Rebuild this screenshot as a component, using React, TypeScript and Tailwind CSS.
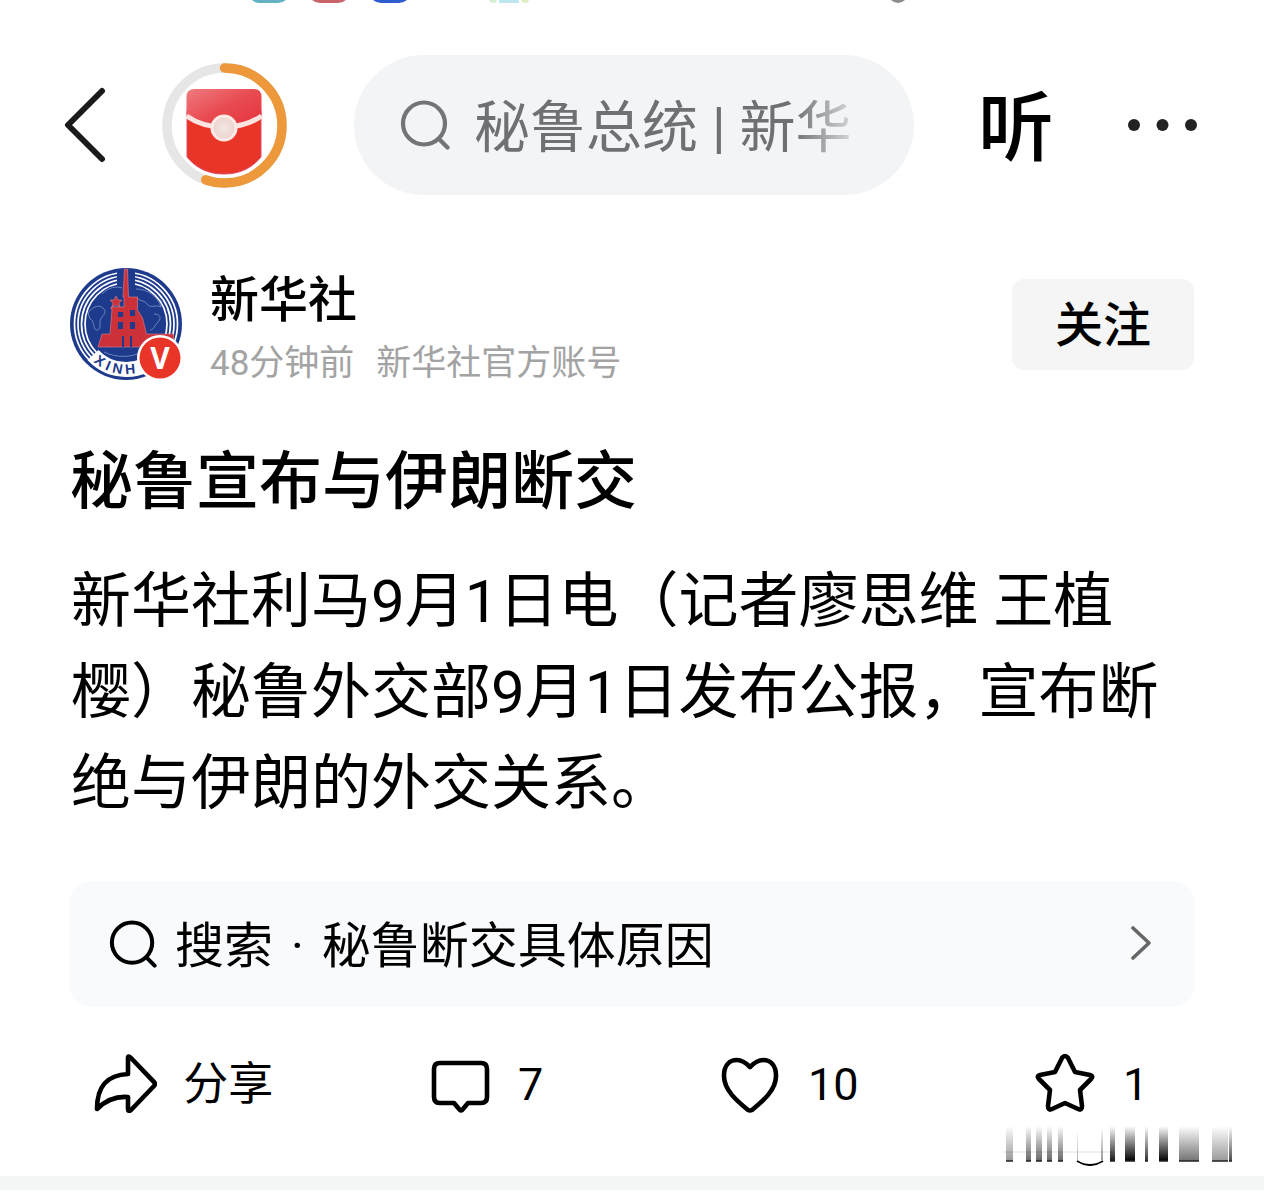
import { ReactNode } from "react";

export default function App() {
  return (
    <main className="w-full overflow-hidden bg-white font-['Roboto','Noto_Sans_CJK_SC',sans-serif] text-black">
      <StatusStrip />
      <Header />
      <article className="mt-[73px] px-[70px]">
        <Author />
        <h1 className="mt-[60px] text-[63px] leading-[84px] font-medium">秘鲁宣布与伊朗断交</h1>
        <p className="mt-8 pl-px text-[60px] leading-[91px]">
          新华社利马9月1日电（记者廖思维 王植樱）秘鲁外交部9月1日发布公报，宣布断绝与伊朗的外交关系。
        </p>
        <a href="#search" className="mt-[52px] flex h-[126px] items-center rounded-[20px] bg-[#f8fafc] pr-[42px] pl-[39px]">
          <SearchIcon className="size-12 shrink-0 text-black" />
          <span className="ml-[18px] flex flex-1 gap-[18px] pt-[6px] text-[49px] leading-[64px]">
            <span>搜索</span>
            <span>·</span>
            <span>秘鲁断交具体原因</span>
          </span>
          <svg viewBox="0 0 22 36" className="h-9 w-[22px]" fill="none" stroke="#666" strokeWidth="3.6" strokeLinecap="round" strokeLinejoin="round">
            <path d="M3 2 19 17 3 32" />
          </svg>
        </a>
      </article>
      <Actions />
      <Residue />
      <div className="mt-[10px] h-[14px] bg-[#f4f5f5]" />
      <div className="h-[2px]" />
    </main>
  );
}

const StatusStrip = () => {
  return (
    <div className="flex h-[3px] items-end overflow-hidden pl-[248px]">
      <div className="h-10 w-[42px] shrink-0 rounded-[12px] bg-[#62b1c4]" />
      <div className="ml-[18px] h-10 w-[42px] shrink-0 rounded-[12px] bg-[#c9646b]" />
      <div className="ml-[19px] h-10 w-[42px] shrink-0 rounded-[12px] bg-[#2f5bd0]" />
      <div className="ml-[78px] h-10 w-2 shrink-0 rounded-b-full bg-[#d5efd0]" />
      <div className="ml-[2px] h-10 w-[20px] shrink-0 bg-[#bfe6ef]" />
      <div className="ml-[2px] h-10 w-2 shrink-0 rounded-b-full bg-[#dcefc0]" />
      <div className="ml-[359px] h-10 w-[20px] shrink-0 rounded-full bg-[#8d8d8d]" />
    </div>
  );
};

const Header = () => {
  return (
    <header className="mt-[52px] flex h-[140px] items-center pr-[66px] pl-[64px]">
      <button aria-label="返回" className="shrink-0">
        <svg viewBox="0 0 42 76" className="h-[76px] w-[42px]" fill="none" stroke="#1a1a1a" strokeWidth="6" strokeLinecap="round" strokeLinejoin="round">
          <path d="M38 4 4 38l34 34" />
        </svg>
      </button>
      <button aria-label="红包" className="ml-[56px] shrink-0">
        <RedPacket />
      </button>
      <label className="ml-[67px] flex h-full flex-1 items-center rounded-full bg-[#f3f4f6] pr-[64px] pl-[46px]">
        <SearchIcon className="size-[50px] shrink-0 text-[#737477]" />
        <input
          type="text"
          aria-label="搜索"
          defaultValue="秘鲁总统 | 新华"
          className="ml-6 h-[100px] w-full min-w-0 bg-transparent pb-[6px] text-[56px] leading-[80px] text-[#6f7073] outline-none [mask-image:linear-gradient(to_right,#000_85%,transparent_105%)]"
        />
      </label>
      <button className="ml-[64px] shrink-0 pt-2 text-[76px] leading-[80px] font-medium">听</button>
      <button aria-label="更多" className="ml-[72px] shrink-0">
        <svg viewBox="0 0 72 12" className="h-3 w-[72px]" fill="#222">
          <circle cx="8" cy="6" r="6" />
          <circle cx="36.500" cy="6" r="6" />
          <circle cx="65" cy="6" r="6" />
        </svg>
      </button>
    </header>
  );
};

const Author = () => {
  return (
    <div className="flex h-28 items-center">
      <Avatar />
      <div className="ml-[28px] flex-1 pt-4">
        <div className="text-[49px] leading-[64px] font-medium">新华社</div>
        <div className="flex gap-[22px] text-[35px] leading-[62px] text-[#a3a3a3]">
          <span>48分钟前</span>
          <span>新华社官方账号</span>
        </div>
      </div>
      <button className="h-[91px] w-[182px] rounded-[12px] bg-[#f5f5f5] pt-1 text-[48px] leading-[64px] font-medium">关注</button>
    </div>
  );
};

const Actions = () => {
  return (
    <div className="mt-[44px] mr-[22px] ml-8 grid h-16 grid-cols-4">
      <Action label="分享" name="分享">
        <path d="M35 6v16C14 23 4 34 4 57c8-8 17-13 31-12v12q0 3 3 1L61 34q2-2 0-4L38 6q-3-3-3 0Z" />
      </Action>
      <Action label="7" name="评论">
        <path d="M12 11h41q6 0 6 6v28q0 6-6 6H40l-5 6q-2 3-4 0l-5-6H12q-6 0-6-6V17q0-6 6-6Z" />
      </Action>
      <Action label="10" name="点赞">
        <path d="M32 15C27 10 23 8 19 8 11 8 6 14 6 24c0 14 13 25 24 34q2 1 4 0c11-9 24-20 24-34C58 14 53 8 45 8c-4 0-8 2-13 7Z" />
      </Action>
      <Action label="1" name="收藏">
        <path d="M29 6q3-4 6 0l7 14 15 3q4 1 1 4L47 38l2 16q0 5-4 3L32 51l-13 6q-4 2-4-3l2-16L6 27q-3-3 1-4l15-3Z" />
      </Action>
    </div>
  );
};

const Action = ({ label, name, children }: { label: string; name: string; children: ReactNode }) => {
  return (
    <button aria-label={name} className="flex items-center justify-center gap-[26px] text-[45px] leading-[64px]">
      <svg viewBox="0 0 64 64" className="size-16" fill="none" stroke="currentColor" strokeWidth="4.6" strokeLinecap="round" strokeLinejoin="round">
        {children}
      </svg>
      <span className="pt-[2px]">{label}</span>
    </button>
  );
};

const SearchIcon = ({ className }: { className: string }) => {
  return (
    <svg viewBox="0 0 50 50" className={className} fill="none" stroke="currentColor" strokeWidth="4.2" strokeLinecap="round">
      <circle cx="24" cy="23.500" r="21" />
      <path d="m39 39 8.500 8.500" />
    </svg>
  );
};

const RedPacket = () => {
  return (
    <svg viewBox="0 0 125 125" className="size-[125px]" fill="none">
      <defs>
        <linearGradient id="flap" x1="0" y1="0" x2="1" y2="1">
          <stop offset="0" stopColor="#ef7b80" />
          <stop offset="0.5" stopColor="#e84a50" />
          <stop offset="1" stopColor="#e5303c" />
        </linearGradient>
        <radialGradient id="clasp">
          <stop offset="0" stopColor="#f3e6e0" />
          <stop offset="1" stopColor="#ecd3cf" />
        </radialGradient>
      </defs>
      <circle cx="62.500" cy="62.500" r="57.500" stroke="#e6e6e6" strokeWidth="9.500" />
      <circle
        cx="62.500"
        cy="62.500"
        r="57.500"
        stroke="#ec983b"
        strokeWidth="9.500"
        strokeLinecap="round"
        pathLength="360"
        strokeDasharray="199 161"
        transform="rotate(-90 62.5 62.5)"
      />
      <path d="M25 48h74v46c-9 11-21 17-37 17S34 105 25 94Z" fill="#e93428" stroke="#e04a68" strokeWidth="1" />
      <path d="M24.500 34q0-8 8-8h59q8 0 8 8v18c-10 9-23 13-37.500 13S35 61 24.500 52Z" fill="url(#flap)" />
      <path d="M24.500 53c10 7 23 11 37.500 11s27.500-4 37.500-11" stroke="#fbe3df" strokeWidth="5" />
      <circle cx="62" cy="65" r="12" fill="url(#clasp)" stroke="#fdeae6" strokeWidth="3" />
    </svg>
  );
};

const Avatar = () => {
  return (
    <svg viewBox="0 0 112 112" className="size-28 shrink-0" fill="none">
      <circle cx="56" cy="56" r="56" fill="#1e3a8c" />
      <g stroke="#fff" strokeWidth="1.700">
        <circle cx="56" cy="56" r="51.500" />
        <circle cx="56" cy="56" r="48" />
        <circle cx="56" cy="56" r="44.500" />
        <circle cx="56" cy="56" r="41" />
      </g>
      {/* white band that carries the lettering */}
      <path d="M23 87A45 45 0 0 0 90 86" stroke="#fff" strokeWidth="15" />
      <path d="M47 1h18v26H47Z" fill="#1e3a8c" />
      <g stroke="#7f95c8" strokeWidth="0.800">
        <path d="M18 45c5-7 12-9 16-4s-5 8-4 14-3 9-5 6-1-9-5-10Z" />
        <path d="M32 26c7-7 15-8 20-6M66 21c12 0 22 8 25 18-6-3-10 2-14-3s-8-2-10-7" />
        <path d="M84 46c6 0 8 4 4 8s-4 8-8 8M34 84c12 6 28 6 40-1" />
      </g>
      <path
        d="M54.500 1h3l1 28h9v13l5 8 4 16h27v13H28l4-13h8l2-25h-1v-2h13V29h-1Z"
        fill="#cc3038"
        stroke="#d98790"
        strokeWidth="0.600"
      />
      <path d="M48 44h5v5h-5ZM60 42h5v6h-5ZM48 54h5v7h-5ZM60 54h5v7h-5ZM52 68h2v11h-2ZM60 68h2v11h-2Z" fill="#1e3a8c" />
      <path d="m46 28 2 4h4l-3 3 1 4-4-2-4 2 1-4-3-3h4Z" fill="#cc3038" stroke="#d98790" strokeWidth="0.600" />
      <path id="rim" d="M6 56A50 50 0 0 0 106 56" />
      <text fill="#1e3a8c" className="font-['Liberation_Sans',sans-serif] text-[14px] font-bold">
        <textPath href="#rim" startOffset="43">X I N H</textPath>
      </text>
      <circle cx="90" cy="90" r="23" fill="#fff" />
      <circle cx="90" cy="90" r="20.500" fill="#e93428" />
      <text x="90" y="101" textAnchor="middle" fill="#fff" className="font-['Open_Sans',sans-serif] text-[30px] font-bold">
        V
      </text>
    </svg>
  );
};

const bars = [
  { x: 3, w: 7, o: 0.4 },
  { x: 23, w: 5, o: 0.6 },
  { x: 33, w: 6, o: 0.6 },
  { x: 44, w: 5, o: 0.6 },
  { x: 55, w: 5, o: 0.6 },
  { x: 107, w: 5, o: 0.9 },
  { x: 122, w: 10, o: 1 },
  { x: 142, w: 3, o: 0.8 },
  { x: 156, w: 9, o: 1 },
  { x: 176, w: 20, o: 0.55 },
  { x: 209, w: 16, o: 0.4 },
  { x: 226, w: 3, o: 0.7 },
];

// faded strokes left over under the action row
const Residue = () => {
  return (
    <div className="mt-[11px] flex justify-end pr-[29px]">
      <svg viewBox="0 0 232 40" className="h-10 w-[232px]" fill="none">
        <defs>
          <linearGradient id="fade" x1="0" y1="0" x2="0" y2="1">
            <stop offset="0" stopColor="#000" stopOpacity="0" />
            <stop offset="1" stopColor="#000" />
          </linearGradient>
        </defs>
        {bars.map((b) => (
          <g key={b.x}>
            <rect x={b.x} y="0" width={b.w} height="35" fill="url(#fade)" opacity={b.o} />
            <path d={`M${b.x} 35h${b.w}`} stroke="#222" strokeWidth="1.500" />
          </g>
        ))}
        <path d="M0 26h110" stroke="#000" strokeOpacity="0.120" />
        <rect x="74" y="4" width="1" height="30" fill="url(#fade)" opacity="0.300" />
        <rect x="98" y="2" width="2" height="32" fill="url(#fade)" opacity="0.400" />
        <path d="M74 35q13 8 26 0" stroke="#000" strokeWidth="2" />
      </svg>
    </div>
  );
};
